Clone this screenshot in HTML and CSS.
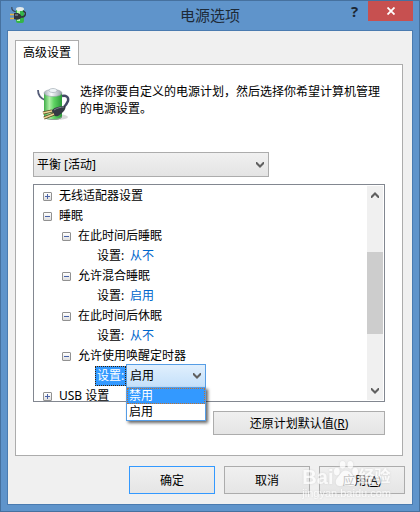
FILE: index.html
```html
<!DOCTYPE html>
<html lang="zh-CN">
<head>
  <meta charset="UTF-8">
  <title>电源选项</title>
  <link rel="stylesheet" href="styles.css">
</head>
<body>

  <div class="window">
    <header class="titlebar">
      <svg class="app-icon" viewBox="0 0 16 16" aria-hidden="true">
        <path d="M2 0C1 3 3 4 6 5" fill="none" stroke="#39485c" stroke-width="1.2"/>
        <rect x="6" y="1" width="8" height="15" rx="2" fill="#35b548"/>
        <rect x="7" y="3" width="3" height="11" fill="#b4f2ab"/>
        <ellipse cx="10" cy="2" rx="4" ry="2" fill="#e4eaec"/>
        <path d="M13 4C17 5 16 10 11 10" fill="none" stroke="#30363d" stroke-width="1.5"/>
        <path d="M4 6H8C11 7 12 9 11 11C9 13 7 13 4 12Z" fill="#30363d"/>
        <path d="M5 8H8" stroke="#9aa4ad" stroke-width="1"/>
        <path d="M0 7.5H4M0 11.5H4" stroke="#e8b53c" stroke-width="1.5"/>
      </svg>
      <h1>电源选项</h1>
      <button type="button" class="help" aria-label="帮助">?</button>
      <button type="button" class="close" aria-label="关闭">
        <svg width="8" height="8" viewBox="0 0 8 8"><path d="M0.5 0.5L7.5 7.5M7.5 0.5L0.5 7.5" stroke="#fff" stroke-width="1.8"/></svg>
      </button>
    </header>

    <main class="client">
      <div class="tabs">
        <button type="button" class="tab">高级设置</button>
      </div>

      <section class="panel">
        <div class="intro">
          <svg class="battery" viewBox="0 0 36 38" aria-hidden="true">
            <defs>
              <linearGradient id="green" x1="0" x2="1" y1="0" y2="0">
                <stop offset="0" stop-color="#3fae48"/>
                <stop offset="0.3" stop-color="#b0f0a8"/>
                <stop offset="0.55" stop-color="#5fd463"/>
                <stop offset="1" stop-color="#2a9a38"/>
              </linearGradient>
              <linearGradient id="metal" x1="0" x2="1" y1="0" y2="0">
                <stop offset="0" stop-color="#a3adb4"/>
                <stop offset="0.4" stop-color="#fafcfd"/>
                <stop offset="1" stop-color="#939ea6"/>
              </linearGradient>
            </defs>
            <ellipse cx="21" cy="32" rx="11" ry="3" fill="#000" opacity="0.15"/>
            <path d="M2 5C2 10 4 13 9 15" fill="none" stroke="#555d78" stroke-width="1.8"/>
            <path d="M8 8V32C10 36 24 36 26 32V8Z" fill="url(#green)"/>
            <path d="M8 31C10 35 24 35 26 31V32C24 36 10 36 8 32Z" fill="#8fa096"/>
            <ellipse cx="17" cy="8" rx="9" ry="3.5" fill="url(#metal)" stroke="#97a2aa" stroke-width="0.6"/>
            <path d="M13 6V5C14 3 20 3 21 5V6C20 8 14 8 13 6Z" fill="#eef3f6" stroke="#9aa5ad" stroke-width="0.6"/>
            <path d="M26 11C30 10 33 12 32 16C31 19 29 21 27 23" fill="none" stroke="#444966" stroke-width="2.4"/>
            <path d="M16 25C19 22 24 21 29 21C31 23 27 28 22 31C19 32 16 30 16 25Z" fill="#353a44"/>
            <path d="M18 25C21 23 25 22 28 22" fill="none" stroke="#7c828e" stroke-width="1"/>
            <path d="M16 26L7 28M18 29L8 33" stroke="#5c4924" stroke-width="3"/>
            <path d="M16 26L7 28M18 29L8 33" stroke="#ecd596" stroke-width="1.5"/>
          </svg>
          <p>选择你要自定义的电源计划，然后选择你希望计算机管理的电源设置。</p>
        </div>

        <div class="combo plan">
          <select aria-label="电源计划">
            <option>平衡 [活动]</option>
          </select>
          <svg class="chevron" viewBox="0 0 8 6"><path d="M0 0H1L4 3L7 0H8V2L4 6L0 2Z"/></svg>
        </div>

        <div class="tree">
          <div class="viewport">
            <ul class="items">
              <li class="row"><button type="button" class="toggle plus" aria-label="展开"></button>无线适配器设置</li>
              <li class="row"><button type="button" class="toggle" aria-label="折叠"></button>睡眠</li>
              <li class="row level1"><button type="button" class="toggle" aria-label="折叠"></button>在此时间后睡眠</li>
              <li class="row level2"><span class="name">设置:</span><a href="#">从不</a></li>
              <li class="row level1"><button type="button" class="toggle" aria-label="折叠"></button>允许混合睡眠</li>
              <li class="row level2"><span class="name">设置:</span><a href="#">启用</a></li>
              <li class="row level1"><button type="button" class="toggle" aria-label="折叠"></button>在此时间后休眠</li>
              <li class="row level2"><span class="name">设置:</span><a href="#">从不</a></li>
              <li class="row level1"><button type="button" class="toggle" aria-label="折叠"></button>允许使用唤醒定时器</li>
              <li class="row level2">
                <label class="name selected" for="wake">设置:</label>
                <div class="combo value">
                  <select id="wake">
                    <option>禁用</option>
                    <option selected>启用</option>
                  </select>
                  <svg class="chevron" viewBox="0 0 8 6"><path d="M0 0H1L4 3L7 0H8V2L4 6L0 2Z"/></svg>
                </div>
              </li>
              <li class="row"><button type="button" class="toggle plus" aria-label="展开"></button>USB 设置</li>
            </ul>
            <div class="scrollbar">
              <svg class="chevron" viewBox="0 0 8 6"><path d="M0 6H1L4 3L7 6H8V4L4 0L0 4Z"/></svg>
              <div class="track"><div class="thumb"></div></div>
              <svg class="chevron" viewBox="0 0 8 6"><path d="M0 0H1L4 3L7 0H8V2L4 6L0 2Z"/></svg>
            </div>
          </div>
          <ul class="dropdown">
            <li class="active">禁用</li>
            <li>启用</li>
          </ul>
        </div>

        <button type="button" class="btn restore">还原计划默认值(<u>R</u>)</button>
      </section>

      <footer class="actions">
        <button type="button" class="btn default">确定</button>
        <button type="button" class="btn">取消</button>
        <button type="button" class="btn">应用(<u>A</u>)</button>
      </footer>
    </main>

    <div class="watermark">
      <div class="brand">
        <span>Bai</span>
        <svg width="25" height="27" viewBox="0 0 26 28">
          <ellipse cx="4" cy="12" rx="3" ry="4"/>
          <ellipse cx="10" cy="5" rx="3" ry="4"/>
          <ellipse cx="18" cy="5" rx="3" ry="4"/>
          <ellipse cx="23" cy="12" rx="3" ry="4"/>
          <path d="M13 11C9 11 8 15 5 18C1 22 3 28 8 27C12 26 15 26 18 27C24 28 26 22 22 18C19 15 18 11 13 11Z"/>
        </svg>
        <span class="cn">经验</span>
      </div>
      <div class="site">jingyan.baidu.com</div>
    </div>
  </div>

</body>
</html>
```
FILE: styles.css
```css
* {
  box-sizing: border-box;
}

body {
  margin: 0;
  font-family: "Noto Sans", "Noto Sans CJK SC", sans-serif;
  font-size: 12px;
  color: #000;
}

button, select {
  font: inherit;
  color: inherit;
  margin: 0;
  padding: 0;
}

ul {
  list-style: none;
  margin: 0;
  padding: 0;
}

.window {
  position: relative;
  display: flex;
  flex-direction: column;
  min-height: 100vh;
  padding: 0 6px 6px;
  border: 1px solid #46719f;
  background: #5f94cb;
}

/* title bar */
.titlebar {
  display: grid;
  grid-template-columns: 72px 1fr 27px 45px;
  height: 29px;
}

.app-icon {
  width: 16px;
  height: 16px;
  margin: 6px 0 0 3px;
}

.titlebar h1 {
  margin: 0;
  font-size: 15px;
  font-weight: normal;
  line-height: 29px;
  text-align: center;
  color: #1d2a38;
}

.help, .close {
  height: 20px;
  border: none;
  background: none;
}

.help {
  font: bold 15px/20px "Open Sans", sans-serif;
  color: #1c2733;
}

.close {
  display: flex;
  align-items: center;
  justify-content: center;
  background: #c75050;
}

.client {
  flex: 1;
  padding: 9px 7px;
  border: 1px solid #4a7bb0;
  background: #f0f0f0;
}

/* tab and its page */
.tabs {
  display: flex;
}

.tab {
  height: 25px;
  margin-bottom: -1px;
  padding: 0 7px 2px;
  border: 1px solid #acacac;
  border-bottom: none;
  background: #fff;
  z-index: 1;
}

.panel {
  margin-right: 2px;
  padding: 18px 17px 20px;
  border: 1px solid #acacac;
  background: #fff;
}

.intro {
  display: flex;
  gap: 8px;
}

.battery {
  flex: none;
  width: 36px;
  height: 38px;
  margin: 2px 0 0 3px;
}

.intro p {
  margin: 0;
  line-height: 17px;
}

/* combo boxes */
.combo {
  display: grid;
  align-items: center;
}

.combo select, .combo .chevron {
  grid-area: 1 / 1;
}

.combo select {
  appearance: none;
  width: 100%;
  height: 100%;
  padding-left: 3px;
  border: 1px solid #acacac;
  border-radius: 0;
  background: linear-gradient(#f0f0f0, #e4e4e4);
}

.combo .chevron {
  justify-self: end;
  margin-right: 5px;
  pointer-events: none;
}

.chevron {
  width: 8px;
  height: 6px;
  fill: #606060;
}

.plan {
  width: 236px;
  max-width: 100%;
  height: 25px;
  margin-top: 29px;
}

/* settings tree */
.tree {
  position: relative;
  margin-top: 7px;
  border: 1px solid #828790;
}

.viewport {
  display: flex;
  height: 216px;
  padding: 1px;
  overflow: hidden;
}

.items {
  flex: 1;
}

.row {
  display: flex;
  align-items: center;
  height: 20px;
  padding-left: 8px;
  line-height: 18px;
}

.level1 {
  padding-left: 27px;
}

.level2 {
  padding-left: 60px;
}

.row a {
  margin-left: 4px;
  color: #0066cc;
  text-decoration: none;
}

.toggle {
  width: 9px;
  height: 9px;
  margin-right: 7px;
  border: 1px solid #919191;
  border-radius: 1px;
  background:
    linear-gradient(#4b63a7, #4b63a7) center / 5px 1px no-repeat,
    linear-gradient(#fff, #dedede);
}

.toggle.plus {
  background:
    linear-gradient(#4b63a7, #4b63a7) center / 5px 1px no-repeat,
    linear-gradient(#4b63a7, #4b63a7) center / 1px 5px no-repeat,
    linear-gradient(#fff, #dedede);
}

.name {
  width: 31px;
  height: 20px;
  padding-left: 1px;
  border: 1px dotted transparent;
  line-height: 18px;
}

.name.selected {
  border-color: #402000;
  background: #3399ff;
  color: #fff;
}

.value {
  width: 80px;
  height: 24px;
}

.value select {
  border-color: #569de5;
  background: linear-gradient(#e0effd, #c4e0fa);
}

.scrollbar {
  display: flex;
  flex-direction: column;
  align-items: center;
  width: 16px;
  padding: 6px 0;
  background: #f0f0f0;
}

.track {
  flex: 1;
  width: 100%;
  padding-top: 54px;
}

.thumb {
  height: 82px;
  background: #cdcdcd;
}

.dropdown {
  position: absolute;
  top: 202px;
  left: 92px;
  width: 80px;
  border: 1px solid #569de5;
  background: #fff;
  box-shadow: 2px 2px 3px rgba(0, 0, 0, 0.6);
}

.dropdown li {
  height: 16px;
  padding-left: 2px;
  line-height: 16px;
}

.dropdown .active {
  outline: 1px dotted #c07030;
  outline-offset: -1px;
  background: #3399ff;
  color: #fff;
}

/* push buttons */
.btn {
  width: 86px;
  height: 28px;
  border: 1px solid #acacac;
  background: linear-gradient(#f0f0f0, #e5e5e5);
}

.btn.default {
  border-color: #3399ff;
}

.restore {
  display: block;
  width: 172px;
  height: 24px;
  margin: 9px 0 0 auto;
}

.actions {
  display: flex;
  justify-content: flex-end;
  gap: 9px;
  margin-top: 10px;
}

/* site mark over the lower right corner */
.watermark {
  position: absolute;
  right: 28px;
  bottom: 12px;
  color: #fff;
  fill: #fff;
  opacity: 0.75;
  pointer-events: none;
  filter: drop-shadow(0 0 1px #ccc);
}

.brand {
  display: flex;
  align-items: flex-end;
  font: bold 20px/20px "Liberation Sans", "Noto Sans CJK SC", sans-serif;
}

.brand .cn {
  font-size: 16px;
}

.site {
  font: 11px/12px "Liberation Sans", sans-serif;
}
```
